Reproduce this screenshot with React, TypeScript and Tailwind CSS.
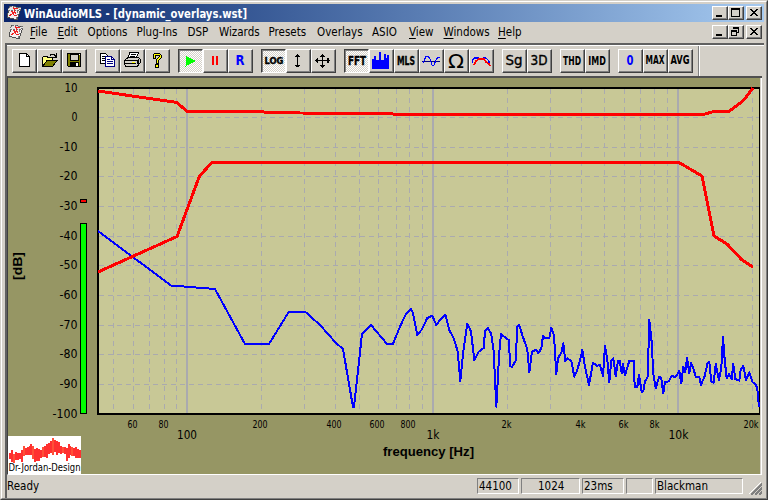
import React from "react";

const UI = "font-['DejaVu_Sans_Condensed','DejaVu_Sans',sans-serif]";
const RAISED =
  "border border-t-white border-l-white border-r-[#404040] border-b-[#404040] shadow-[inset_-1px_-1px_0_#808080]";

const menus: { label: string; hot?: string; w: string }[] = [
  { label: "File", hot: "F", w: "w-[27.5px]" },
  { label: "Edit", hot: "E", w: "w-[30px]" },
  { label: "Options", w: "w-[49px]" },
  { label: "Plug-Ins", w: "w-[51px]" },
  { label: "DSP", w: "w-[31.5px]" },
  { label: "Wizards", w: "w-[49.5px]" },
  { label: "Presets", w: "w-[48.5px]" },
  { label: "Overlays", w: "w-[55px]" },
  { label: "ASIO", w: "w-[37px]" },
  { label: "View", hot: "V", w: "w-[34.5px]" },
  { label: "Windows", hot: "W", w: "w-[54.5px]" },
  { label: "Help", hot: "H", w: "w-[30px]" },
];

function Label({ x, y, w, size = 12, bold, fill = "#000", stroke, children, family = "'DejaVu Sans Condensed','DejaVu Sans',sans-serif", anchor = "start", transform }: {
  x: number; y: number; w?: number; size?: number; bold?: boolean; fill?: string; stroke?: string; children: string; family?: string; anchor?: "start" | "middle" | "end"; transform?: string;
}) {
  return (
    <text x={x} y={y} textLength={w} lengthAdjust="spacingAndGlyphs" fontSize={size} fontWeight={bold ? 700 : 400} fill={fill} stroke={stroke} strokeWidth={stroke ? 0.35 : undefined} fontFamily={family} textAnchor={anchor} transform={transform}>
      {children}
    </text>
  );
}

function DiceIcon() {
  return (
    <svg width="16" height="16" viewBox="0 0 16 16" shapeRendering="crispEdges">
      <path d="M4 1L15 3L11 15L1 12Z" fill="#f4f0f0" stroke="#505050" />
      <path d="M4 1L15 3L13 6L2 5Z" fill="#e4e4e4" stroke="#707070" strokeDasharray="2 1" />
      <path d="M12 6L10 14" stroke="#808080" strokeDasharray="2 1" />
      <path d="M3 11L6 9L7 7L8 10L11 11M5 6L9 8L8 3L12 4" fill="none" stroke="#f02020" strokeWidth="1.2" />
    </svg>
  );
}

function CaptionButton({ kind }: { kind: "min" | "max" | "restore" | "close" }) {
  return (
    <div className={`h-[14px] w-4 bg-[#d4d0c8] ${RAISED}`}>
      <svg className="block" width="14" height="12" viewBox="0 0 14 12" shapeRendering="crispEdges" fill="none" stroke="#000">
        {kind === "min" && <path d="M3 9H9" strokeWidth="2" />}
        {kind === "max" && <path d="M2.5 1.5H10.5V9.5H2.5ZM2 2.5H11" />}
        {kind === "restore" && <path d="M4.5 3V1.5H9.5V6.5H8M4 2.5H10M2.5 4.5H7.5V9.5H2.5ZM2 5.5H8" />}
        {kind === "close" && <path d="M3 2L10 9M4 2L11 9M10 2L3 9M11 2L4 9" />}
      </svg>
    </div>
  );
}

function Tool({ pressed, children }: { pressed?: boolean; children: React.ReactNode }) {
  return (
    <div
      className={
        pressed
          ? "h-6 w-[25px] border border-t-[#404040] border-l-[#404040] border-r-white border-b-white bg-[#e9e7e3] bg-[repeating-conic-gradient(#fff_0_25%,#d4d0c8_0_50%)] bg-size-[2px_2px] shadow-[inset_1px_1px_0_#808080]"
          : `h-6 w-[25px] bg-[#d4d0c8] ${RAISED}`
      }
    >
      <svg className="block overflow-visible" width="23" height="22" viewBox="1 1 23 22" shapeRendering="crispEdges" fill="none">
        {children}
      </svg>
    </div>
  );
}

function Glyph({ text, w, size = 12, fill, stroke, x = 12, y = 16, bold = true }: { text: string; w: number; size?: number; fill?: string; stroke?: string; x?: number; y?: number; bold?: boolean }) {
  return <Label x={x} y={y} w={w} size={size} bold={bold} fill={fill} stroke={stroke} anchor="middle">{text}</Label>;
}

function Toolbar() {
  return (
    <div className="flex h-[31px] shrink-0 border-t border-white">
      <div className="flex w-[692px] gap-2 border-r border-[#808080] pt-[3px] pl-[5px]">
        <div className="flex">
          <Tool>
            <path d="M7.5 4.5H14.5L17.5 7.5V17.5H7.5Z" fill="#fff" stroke="#000" />
            <path d="M14.5 4V7.5H18" stroke="#000" />
          </Tool>
          <Tool>
            <path d="M5.5 17V8.5L7 7.5H10L11 8.5H15.5V11" fill="#ffff80" stroke="#000" />
            <path d="M6 17L10 11.5H20L15.5 17.5H5.5Z" fill="#808000" stroke="#000" />
            <path d="M13 6.5L14 5.5H17L19 7.5M19.5 4V8.5H16" stroke="#000" />
          </Tool>
          <Tool>
            <path d="M5.5 4.5H18.5V17.5H6.5L5.5 16.5Z" fill="#808000" stroke="#000" />
            <path d="M8 5H16V11H8Z" fill="#d4d0c8" stroke="#000" />
            <path d="M8 13H17V18H8Z" fill="#000" />
            <path d="M14 14H16V17H14ZM17 5H18V6H17Z" fill="#fff" />
          </Tool>
        </div>
        <div className="flex">
          <Tool>
            <path d="M5.5 4.5H10.5L12.5 6.5V14.5H5.5Z" fill="#fff" stroke="#000" />
            <path d="M7 7.5H10M7 9.5H11M7 11.5H11" stroke="#000" />
            <path d="M10.5 7.5H16.5L19.5 10.5V17.5H10.5Z" fill="#fff" stroke="#000080" />
            <path d="M16.5 8V10.5H19M12 10.5H15M12 12.5H18M12 14.5H18" stroke="#000080" />
          </Tool>
          <Tool>
            <path d="M8.5 9V7L10 3.5H18.5L16 10" fill="#fff" stroke="#000" />
            <path d="M11 5.5H16M10 7.5H15" stroke="#000" />
            <path d="M4.5 11.5L8 8.5H18.5L20 10V14L17 17.5H6L4.5 15.5Z" fill="#d4d0c8" stroke="#000" />
            <path d="M4 11.5H17V15M5 14.5H16M18 10L19 15" stroke="#000" />
            <path d="M12 13H15" stroke="#ff0" />
          </Tool>
          <Tool>
            <path d="M8 8V6L10 4H14L16 6V9L13 12V14H11V11L14 8V6H10V9H8Z" fill="#ff0" stroke="#000" />
            <path d="M10.5 15.5H13.5V18.5H10.5Z" fill="#ff0" stroke="#000" />
          </Tool>
        </div>
        <div className="flex">
          <Tool pressed>
            <path d="M7.5 6.5L17.5 12L7.5 17.5Z" fill="#0f0" />
          </Tool>
          <Tool>
            <path d="M10 7V16M14 7V16" stroke="#f00" strokeWidth="2" />
          </Tool>
          <Tool><Glyph text="R" w={9} size={13.5} fill="#00f" y={16} /></Tool>
        </div>
        <div className="flex">
          <Tool pressed><Glyph text="LOG" w={19} size={9.5} x={13} y={15} stroke="#000" /></Tool>
          <Tool>
            <path d="M11.5 5V18M10 6.5H13M9 7.5H14M9 16.5H14M10 17.5H13" stroke="#000" />
          </Tool>
          <Tool>
            <path d="M11.5 5V19M4 11.5H19M10 6.5H13M9 7.5H14M9 16.5H14M10 17.5H13M5.5 10V13M6.5 9V14M17.5 9V14M16.5 9V14" stroke="#000" />
          </Tool>
        </div>
        <div className="flex">
          <Tool pressed><Glyph text="FFT" w={18} size={12} x={13} stroke="#000" /></Tool>
          <Tool>
            <path d="M3 20V10H5V7H7V11H10V3H12V11H15V5H17V9H18V6H20V20Z" fill="#00f" />
          </Tool>
          <Tool><Glyph text="MLS" w={18} size={12} stroke="#000" /></Tool>
          <Tool>
            <path d="M3 12.5H21" stroke="#000080" />
            <path d="M4 14L5 12L7 7H9L11 10L13 16H15L17 11L19 8L21 9" stroke="#00f" />
          </Tool>
          <Tool><Glyph text="Ω" w={16} size={20} bold={false} y={18.5} /></Tool>
          <Tool>
            <path d="M3.5 14V11L6 9H10L12 11L14 9H17L20 12V14" stroke="#00f" strokeWidth="1.4" />
            <path d="M5 16L7 12L10 10H15L17 13L20 15L21 17" stroke="#f00" strokeWidth="1.6" />
          </Tool>
        </div>
        <div className="flex">
          <Tool><Glyph text="Sg" w={17} size={14} y={16} bold={false} stroke="#000" /></Tool>
          <Tool><Glyph text="3D" w={17} size={14} y={16} bold={false} stroke="#000" /></Tool>
        </div>
        <div className="flex">
          <Tool><Glyph text="THD" w={18} size={13} /></Tool>
          <Tool><Glyph text="IMD" w={17.5} size={13} /></Tool>
        </div>
        <div className="flex">
          <Tool><Glyph text="0" w={7} size={13.5} fill="#00f" /></Tool>
          <Tool><Glyph text="MAX" w={19} size={12} y={15} /></Tool>
          <Tool><Glyph text="AVG" w={19} size={12} y={15} /></Tool>
        </div>
      </div>
      <div className="flex-1 border-l border-white" />
    </div>
  );
}

const spectrum =
  "98,231 171,285.5 215,289 245,344 269,344 289,311.5 305,311.5 320,325 336,343 343,349 353,407 354,407 362,334 371,325 387,344 393,343.7 400.7,325 406,314 411,309 413,313 417.3,335 421.7,329.7 427.3,318 432.3,315.7 436.3,325 441,318.7 445.3,314.7 449.3,330 454,339 457.7,351.7 460.3,381 463.3,351.7 467.3,323.7 471,331.3 474.3,360 478.7,351.7 483.7,348 485,331.3 488,328.3 491.3,334 493.7,351.7 496.3,406.7 499.3,351.7 501,334.3 508.7,340 510.3,366 512,367 516,360 517,327.3 519.3,325 522,334.3 527.3,349.3 529.3,372.3 532,351.7 536,349.7 538.3,353.3 541.3,348.3 543,336 545.3,338.3 549.3,337.7 551.3,328 554,335 556.3,374.3 558,358.3 561.7,351.7 563.3,343.3 565.3,361 567.3,358.3 571.3,361 574.3,376.7 576.7,371.7 580.3,359.3 582.3,350 585,366.7 589,385 593,362.7 596.7,365.7 600,365.3 603,376 605,346 607.3,360 609.3,382.3 611.3,360.7 613.3,358.3 615.7,376 618,361 619.7,361 621.7,373.3 623,364 625,375.3 629.3,361 633.7,361 634.7,387 637.3,387 639,375 641.7,392 643.3,391 645,381.7 647.7,376.7 649.3,320 652,345 653,371.7 655.7,388 659.3,376.7 661.3,378.3 663.3,393.3 665,382 668.7,381.3 671.7,375.7 675.3,377.3 679.3,371 681.3,383.3 683.3,366.7 685.3,372.3 687,357.7 689.3,373.3 691,362.7 693.3,368.3 696,377.3 699.3,377.3 701,385 704.7,376 707.3,364 709.3,361.7 711.3,381.7 713.7,382.7 715.7,364 719,380 721.3,368.3 723,336.7 724.7,360 726.7,378.3 729,374 731.7,379 733.3,364 735.3,379 739.3,380.7 740.7,370 743.3,366 746,380 749.3,372.3 752.7,382.3 756,385 757.3,389 759,407.3";

const minorX = [113, 133, 149, 164, 176, 261, 304, 335, 359, 378, 396, 409, 422, 507, 550, 581, 604, 624, 640, 654, 667, 752];
const majorX = [187, 433, 678];
const levels: [string, number][] = [
  ["10", 88], ["0", 117], ["-10", 147], ["-20", 176], ["-30", 206], ["-40", 236],
  ["-50", 265], ["-60", 295], ["-70", 325], ["-80", 354], ["-90", 384], ["-100", 414],
];
const smallTicks: [string, number, number][] = [
  ["60", 132.5, 10], ["80", 163.5, 10], ["200", 260, 15], ["400", 334, 15], ["600", 377, 15], ["800", 408, 15],
  ["2k", 506.5, 10], ["4k", 580.5, 10], ["6k", 623.5, 10], ["8k", 654.5, 10], ["20k", 751, 15],
];
const logoBars: [number, number][] = [
  [453, 459], [450, 462], [454, 463], [452, 460], [453, 460], [453, 459], [450, 462], [446, 456], [448, 455], [447, 455],
  [446, 455], [444, 455], [446, 459], [449, 462], [448, 461], [449, 461], [450, 458], [447, 457], [446, 457], [444, 458],
  [443, 454], [441, 453], [438, 455], [440, 452], [441, 455], [442, 453], [446, 454], [447, 453], [447, 454], [448, 461],
  [444, 458], [446, 455], [447, 456], [448, 456], [447, 458], [449, 458], [450, 458],
];

function Chart() {
  return (
    <svg className="block" width="752" height="396" viewBox="8 78 752 396" shapeRendering="crispEdges">
      <rect x="8" y="78" width="752" height="396" fill="#969664" />
      <rect x="98" y="88" width="662" height="326" fill="#c8c896" />
      <g stroke="#aaaaaf" strokeDasharray="5 4">
        {levels.slice(1, -1).map(([t, y]) => <line key={t} x1="99" x2="759" y1={y + 0.5} y2={y + 0.5} />)}
        {minorX.map((x) => <line key={x} x1={x + 0.5} x2={x + 0.5} y1="89" y2="413" />)}
      </g>
      {majorX.map((x) => <line key={x} x1={x} x2={x} y1="89" y2="413" stroke="#aaaaaf" strokeWidth="2" />)}
      <path d="M760 88H98V414H760" fill="none" stroke="#000" strokeWidth="2" />
      <path d="M759.5 87V415" stroke="#000" />
      <polyline points={spectrum} fill="none" stroke="#00f" strokeWidth="2" strokeLinejoin="round" />
      <g fill="none" stroke="#f00" strokeWidth="3" strokeLinejoin="round">
        <polyline points="98,91 177,102.5 187,111.5 245,111.5 300,113 385,113.5 400,114.5 703,114.5 713,111.7 729,111.5 743,101 753,88" />
        <polyline points="98,272 177,236.5 199.5,176 212,162.5 679,162.5 702,176 714,236 727,244 742,260 753,267" />
      </g>
      {levels.map(([t, y]) => (
        <Label key={t} x={77.5} y={y + 4} w={t.length === 4 ? 25 : t.length === 3 ? 18 : t.length === 2 ? 13 : 6} size={12} anchor="end">{t}</Label>
      ))}
      {smallTicks.map(([t, x, w]) => <Label key={t} x={x} y={428} w={w} size={10} anchor="middle">{t}</Label>)}
      <Label x={187} y={439} w={20} size={12} anchor="middle">100</Label>
      <Label x={433} y={439} w={13} size={12} anchor="middle">1k</Label>
      <Label x={678.5} y={439} w={20} size={12} anchor="middle">10k</Label>
      <Label x={428.5} y={456} w={91} size={13} bold anchor="middle" family="'Liberation Sans',Arial,sans-serif">frequency [Hz]</Label>
      <Label x={0} y={0} w={28} size={13} bold anchor="middle" family="'Liberation Sans',Arial,sans-serif" transform="translate(22 266) rotate(-90)">[dB]</Label>
      <rect x="80.5" y="199.5" width="6" height="3" fill="#f00" stroke="#000" />
      <rect x="80.5" y="223.5" width="6" height="190" fill="#0f0" stroke="#000" />
      <rect x="8" y="436" width="73" height="38" fill="#fff" />
      {logoBars.map(([a, b], i) => (
        <rect key={i} x={9 + i * 1.95} y={a} width="2" height={b - a} fill={i % 5 === 2 ? "#ff5038" : "#ff3030"} />
      ))}
      <Label x={8.5} y={471} w={72} size={10}>Dr-Jordan-Design</Label>
    </svg>
  );
}

function Cell({ className, children }: { className: string; children?: string }) {
  return (
    <div className={`h-4 border border-t-[#808080] border-l-[#808080] border-r-white border-b-white ${className}`}>
      {children && <span className="block whitespace-pre leading-[15px]">{children}</span>}
    </div>
  );
}

export default function App() {
  return (
    <div className={`flex h-[500px] w-[768px] flex-col overflow-hidden border border-t-[#d4d0c8] border-l-[#d4d0c8] border-r-[#404040] border-b-[#404040] bg-[#d4d0c8] text-[11.5px] text-black ${UI}`}>
      <div className="flex min-h-0 flex-1 flex-col border border-t-white border-l-white border-r-[#808080] border-b-[#808080] px-[2px] pt-[2px]">
        <div className="flex h-[18px] shrink-0 items-center bg-linear-to-r from-[#0a246a] to-[#a6caf0] pr-[2px] pl-[2px]">
          <DiceIcon />
          <svg className="ml-[2px] overflow-visible" width="228" height="18">
            <Label x={0} y={13.5} w={223} size={13} bold fill="#fff">WinAudioMLS - [dynamic_overlays.wst]</Label>
          </svg>
          <div className="ml-auto flex">
            <CaptionButton kind="min" />
            <CaptionButton kind="max" />
            <div className="w-[2px]" />
            <CaptionButton kind="close" />
          </div>
        </div>
        <div className="flex h-[21px] shrink-0 items-center pr-[4px] pb-px pl-[4px]">
          <DiceIcon />
          <div className="ml-[6px] flex leading-5">
            {menus.map((m) => (
              <span key={m.label} className={`${m.w} shrink-0 whitespace-nowrap`}>
                {m.hot ? <><span className="underline underline-offset-2">{m.hot}</span>{m.label.slice(1)}</> : m.label}
              </span>
            ))}
          </div>
          <div className="-mr-[2px] ml-auto flex">
            <CaptionButton kind="min" />
            <CaptionButton kind="restore" />
            <div className="w-[2px]" />
            <CaptionButton kind="close" />
          </div>
        </div>
        <div className="ml-px flex min-h-0 flex-1 flex-col border-t-2 border-l-2 border-t-[#606060] border-l-[#606060]">
          <Toolbar />
          <div className="mr-[2px] flex h-[399px] shrink-0 border-t-2 border-b border-l border-t-[#505050] border-b-white border-l-[#404040]">
            <Chart />
            <div className="w-[2px] border-l border-l-[#d4d0c8] bg-white" />
          </div>
          <div className="flex h-[22px] shrink-0 items-center pr-[2px]">
            <span className="w-[470px] pt-px">Ready</span>
            <Cell className="w-[42px] pl-px">44100</Cell>
            <Cell className="ml-[2px] w-[59px] pl-4">1024</Cell>
            <Cell className="ml-[2px] w-[42px] pl-px">23ms</Cell>
            <Cell className="ml-[2px] w-[27px]" />
            <Cell className="ml-[2px] w-[88px] pl-px">Blackman</Cell>
            <svg className="mt-1 ml-auto" width="13" height="13" viewBox="0 0 13 13" shapeRendering="crispEdges">
              <path d="M0 12L12 0M4 12L12 4M8 12L12 8" stroke="#fff" />
              <path d="M2 13L13 2M6 13L13 6M10 13L13 10" stroke="#808080" strokeWidth="1.6" />
            </svg>
          </div>
        </div>
      </div>
    </div>
  );
}
